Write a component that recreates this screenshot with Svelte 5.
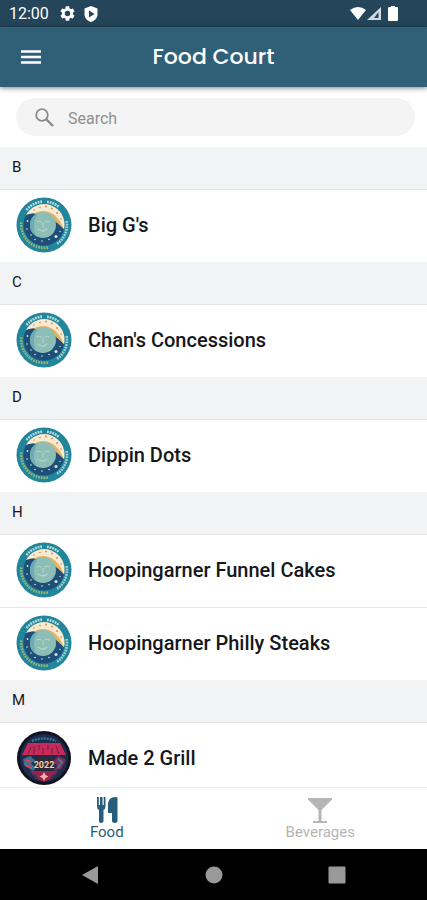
<script>
    let query = $state("");
    let activeTab = $state("food");

    const sections = [
        { letter: "B", vendors: [{ name: "Big G's", logo: "moon" }] },
        { letter: "C", vendors: [{ name: "Chan's Concessions", logo: "moon" }] },
        { letter: "D", vendors: [{ name: "Dippin Dots", logo: "moon" }] },
        {
            letter: "H",
            vendors: [
                { name: "Hoopingarner Funnel Cakes", logo: "moon" },
                { name: "Hoopingarner Philly Steaks", logo: "moon" },
            ],
        },
        { letter: "M", vendors: [{ name: "Made 2 Grill", logo: "grill" }] },
    ];

    const filtered = $derived(
        sections
            .map((section) => ({
                ...section,
                vendors: section.vendors.filter((v) =>
                    v.name.toLowerCase().includes(query.trim().toLowerCase())
                ),
            }))
            .filter((section) => section.vendors.length > 0)
    );
</script>

{#snippet moonLogo()}
    <svg class="logo" viewBox="0 0 56 56" aria-hidden="true">
        <circle cx="28" cy="28" r="27.5" fill="#21859b" />
        <!-- lettering round the rim -->
        <g fill="none" stroke-width="2.6">
            <path d="M10.5 13A23.500 23.500 0 0 1 26 4.600" stroke="#b5d9d8" stroke-dasharray="1.9 0.8" />
            <path d="M31 4.700A23.500 23.500 0 0 1 43 10" stroke="#b5d9d8" stroke-dasharray="1.9 0.8" />
            <path d="M50.6 24A22.9 22.9 0 0 1 41 47" stroke="#a5d0d2" stroke-dasharray="1.8 0.9" />
            <path d="M32 50.5A22.9 22.9 0 0 1 5.4 25" stroke="#8fb37c" stroke-dasharray="1.8 0.9" />
        </g>
        <circle cx="28" cy="28" r="20.5" fill="#1d4f78" />
        <path d="M10 18A20.5 20.5 0 0 1 48 32.5C44 26 39 20 31 17.5C24 15.500 18 15.500 10 18Z" fill="#f6ead0" />
        <path d="M17 17C29 9.500 43 17 47.500 32C43 27 40 25 36 22C29 17.500 23 17 17 17Z" fill="#e5b263" />
        <g fill="#d98258">
            <circle cx="18" cy="13" r="0.8" />
            <circle cx="24" cy="10.500" r="0.8" />
            <circle cx="30" cy="9.500" r="0.9" />
            <circle cx="36" cy="11.500" r="0.9" />
            <circle cx="41" cy="16" r="0.9" />
            <circle cx="45" cy="22" r="0.8" />
        </g>
        <circle cx="27" cy="28" r="13" fill="#8cbdb7" />
        <path d="M22 16A13 13 0 0 0 20 39C17 31 17 23 22 16Z" fill="#6cabb5" />
        <g fill="none" stroke="#b4d4c5" stroke-width="1.2" stroke-linecap="round">
            <path d="M21 25q2-1.500 4 0M29 25q2-1.500 4 0M27 26v4M22 32q5 4 9 0" />
        </g>
        <g fill="#d5e3da">
            <circle cx="11.5" cy="24" r="0.9" />
            <circle cx="11" cy="32" r="0.8" />
            <circle cx="15" cy="38" r="0.8" />
            <circle cx="19" cy="42.500" r="0.8" />
            <circle cx="26" cy="44" r="0.8" />
            <circle cx="33" cy="42.500" r="0.8" />
            <circle cx="40" cy="39.500" r="1.6" />
            <circle cx="44" cy="34.500" r="0.7" />
        </g>
    </svg>
{/snippet}

{#snippet grillLogo()}
    <svg class="logo" viewBox="0 0 56 56" aria-hidden="true">
        <circle cx="28" cy="28" r="27" fill="#11131f" />
        <circle cx="28" cy="28" r="24" fill="#1d2c4c" />
        <path d="M16 11q12-5 24 0" fill="none" stroke="#397292" stroke-width="2.500" stroke-dasharray="2 1" />
        <path d="M12 13h32l2 4 4 8H6l4-8Z" fill="#c92b58" />
        <path d="M12 24l3-7M18 16v8M23 15v5M27 18v6M32 15v5M36 18v6M40 16l3 8" fill="none" stroke="#63204a" stroke-width="1" />
        <path d="M7 29l7-3 6 5-5 2 5 5-3 3-9-6Z" fill="#39708b" />
        <path d="M10 30l5 2M9 35l7 3" stroke="#d14466" stroke-width="2" />
        <path d="M49 29l-7-3-5 6 4 4-4 5 8-2 4-7Z" fill="#792f5c" />
        <path d="M42 29l4 3-4 6" fill="none" stroke="#447e9b" stroke-width="1.600" />
        <rect x="19" y="27" width="18" height="13" fill="#302833" />
        <text class="year" x="28" y="38" text-anchor="middle">2022</text>
        <path d="M14 41h28l-5 7-9 4-9-4Z" fill="#9b214a" />
        <path d="M28 42l1.500 3 3 1.500-3 1.500-1.500 3-1.500-3-3-1.500 3-1.500Z" fill="#f0b49e" />
        <path d="M17 44l4 4M39 44l-4 4" stroke="#293b62" stroke-width="2" />
    </svg>
{/snippet}

<div class="app">
    <div class="status-bar">
        <div class="status-left">
            <span>12:00</span>
            <svg class="gear" viewBox="2 2 20 20" aria-hidden="true">
                <path fill="currentColor" fill-rule="evenodd" d="M19.140 12.940c.04-.3.06-.61.06-.94s-.02-.64-.07-.94l2.030-1.580c.18-.14.23-.41.12-.61l-1.920-3.320c-.12-.22-.37-.29-.59-.22l-2.390.96c-.5-.38-1.030-.7-1.620-.94l-.36-2.540A.48.48 0 0 0 13.920 2.400h-3.840c-.24 0-.43.17-.47.41l-.36 2.540c-.59.24-1.130.57-1.620.94l-2.390-.96c-.22-.08-.47 0-.59.22L2.740 8.870c-.12.21-.08.47.12.61l2.030 1.580c-.05.3-.09.63-.09.94s.02.64.07.94l-2.030 1.580c-.18.14-.23.41-.12.61l1.920 3.320c.12.22.37.29.59.22l2.390-.96c.5.38 1.030.7 1.620.94l.36 2.540c.05.24.24.41.48.41h3.840c.24 0 .44-.17.47-.41l.36-2.540c.59-.24 1.130-.56 1.620-.94l2.390.96c.22.08.47 0 .59-.22l1.920-3.320c.12-.22.07-.47-.12-.61ZM12 15.600a3.600 3.600 0 1 1 0-7.200 3.600 3.600 0 0 1 0 7.200Z" />
            </svg>
            <svg class="shield" viewBox="0 0 14 16" aria-hidden="true">
                <path fill="currentColor" fill-rule="evenodd" d="M7 0l6.500 2.500V8c0 4-2.500 6.600-6.500 8C3 14.600.5 12 .5 8V2.500ZM5 4.500v7L10.500 8Z" />
            </svg>
        </div>
        <svg class="signals" viewBox="0 0 48 16" aria-hidden="true">
            <path fill="currentColor" d="M0 4q8-6 16 0L8 14Z" />
            <path fill="#d3dbe2" d="M31 1v13H17Z" />
            <path fill="#24455a" d="M28.500 6v6H24Z" />
            <path fill="currentColor" d="M41 0h4v1h2q1 0 1 1v12q0 1-1 1h-8q-1 0-1-1V2q0-1 1-1h2Z" />
        </svg>
    </div>

    <header>
        <button class="menu" aria-label="Open menu">
            <svg viewBox="0 0 20 14" aria-hidden="true">
                <path d="M0 1.500h20M0 7h20M0 12.500h20" stroke="currentColor" stroke-width="2.600" />
            </svg>
        </button>
        <h1>Food Court</h1>
    </header>

    <div class="search">
        <label class="search-box">
            <svg viewBox="0 0 19 19" aria-hidden="true">
                <circle cx="7" cy="7" r="5.800" fill="none" stroke="currentColor" stroke-width="1.800" />
                <path d="M11.500 11.500l6.500 6.500" stroke="currentColor" stroke-width="2.400" />
            </svg>
            <input type="text" placeholder="Search" aria-label="Search" bind:value={query} />
        </label>
    </div>

    <main>
        {#each filtered as section (section.letter)}
            <section>
                <h2>{section.letter}</h2>
                <ul>
                    {#each section.vendors as vendor (vendor.name)}
                        <li>
                            {#if vendor.logo === "moon"}
                                {@render moonLogo()}
                            {:else}
                                {@render grillLogo()}
                            {/if}
                            <span>{vendor.name}</span>
                        </li>
                    {/each}
                </ul>
            </section>
        {/each}
    </main>

    <nav class="tabs" aria-label="Categories">
        <button class:active={activeTab === "food"} onclick={() => (activeTab = "food")}>
            <svg viewBox="0 0 24 28" aria-hidden="true">
                <g fill="currentColor">
                    <path d="M2 1h1.800v8h1.200V1h2.500v8h1.200V1h1.800v9q0 3-2 4v11q0 2-2.300 2T4 25V14q-2-1-2-4Z" />
                    <path d="M22.500 2v23q0 2-2.700 2T17 25v-8h-4V9q0-8 7.500-8 2 0 2 1Z" />
                </g>
            </svg>
            <span>Food</span>
        </button>
        <button class:active={activeTab === "beverages"} onclick={() => (activeTab = "beverages")}>
            <svg viewBox="0 0 24 28" aria-hidden="true">
                <path fill="currentColor" d="M0 2h24v1.500L13.500 14v11H19v2H5v-2h5.500V14L0 3.500Z" />
            </svg>
            <span>Beverages</span>
        </button>
    </nav>

    <div class="system-nav">
        <button aria-label="Back">
            <svg viewBox="0 0 18 18" aria-hidden="true">
                <path d="M0 9L16 0v18Z" fill="currentColor" />
            </svg>
        </button>
        <button aria-label="Home">
            <svg viewBox="0 0 18 18" aria-hidden="true">
                <circle cx="9" cy="9" r="8.500" fill="currentColor" />
            </svg>
        </button>
        <button aria-label="Recent apps">
            <svg viewBox="0 0 18 18" aria-hidden="true">
                <rect x="0.5" y="0.5" width="17" height="17" rx="1" fill="currentColor" />
            </svg>
        </button>
    </div>
</div>

<style>
    :global(body) {
        margin: 0;
    }
    .app {
        display: flex;
        flex-direction: column;
        height: 100vh;
        background-color: #fff;
        color: #15171a;
        font-family: Roboto, "Liberation Sans", sans-serif;
    }
    button {
        padding: 0;
        border: none;
        background: none;
        color: inherit;
        font: inherit;
        cursor: pointer;
    }
    svg {
        display: block;
        flex: none;
    }
    .status-bar {
        flex: none;
        display: flex;
        align-items: center;
        justify-content: space-between;
        height: 27px;
        padding: 0 29px 0 9px;
        background-color: #24455a;
        color: #fff;
        font-size: 16px;
    }
    .status-left {
        display: flex;
        align-items: center;
    }
    .gear {
        width: 15px;
        height: 15px;
        margin-left: 11px;
    }
    .shield {
        width: 14px;
        height: 16px;
        margin-left: 9px;
    }
    .signals {
        width: 48px;
        height: 16px;
    }
    header {
        position: relative;
        flex: none;
        display: grid;
        grid-template-columns: 40px 1fr 40px;
        align-items: center;
        height: 60px;
        padding: 0 11px;
        background-color: #305f78;
        box-shadow: 0 1px 5px rgba(0, 0, 0, 0.5);
        color: #fff;
    }
    .menu {
        display: flex;
        align-items: center;
        justify-content: center;
        height: 40px;
    }
    .menu svg {
        width: 20px;
        height: 14px;
    }
    h1 {
        margin: 0;
        font-family: Poppins, Inter, sans-serif;
        font-size: 22px;
        font-weight: 500;
        line-height: 32px;
        text-align: center;
    }
    .search {
        flex: none;
        padding: 11px 12px 11px 16px;
    }
    .search-box {
        display: flex;
        align-items: center;
        gap: 14px;
        height: 38px;
        padding: 0 19px;
        border-radius: 19px;
        background-color: #f4f4f4;
        color: #8a8a8a;
    }
    .search-box svg {
        width: 19px;
        height: 19px;
    }
    input {
        flex: 1;
        min-width: 0;
        padding: 2px 0 0;
        border: none;
        outline: none;
        background: none;
        color: #333;
        font: inherit;
        font-size: 16px;
    }
    input::placeholder {
        color: #8f8f8f;
        opacity: 1;
    }
    main {
        flex: 1;
        min-height: 0;
        overflow-y: auto;
        scrollbar-width: none;
    }
    h2 {
        box-sizing: border-box;
        height: 43px;
        margin: 0;
        padding: 0 12px;
        border-bottom: 1px solid #e2e4e5;
        background-color: #f1f3f4;
        font-size: 15px;
        font-weight: 400;
        line-height: 40px;
    }
    ul {
        margin: 0;
        padding: 0;
        list-style: none;
    }
    li {
        display: flex;
        align-items: center;
        gap: 16px;
        height: 70px;
        padding: 0 16px 2px;
        font-size: 20px;
        font-weight: 500;
    }
    li + li {
        border-top: 1px solid #e8e8e8;
    }
    .logo {
        width: 56px;
        height: 56px;
    }
    .year {
        fill: #f3cfae;
        font-size: 9px;
        font-weight: 700;
    }
    .tabs {
        flex: none;
        display: flex;
        border-top: 1px solid #ececec;
    }
    .tabs button {
        flex: 1;
        display: flex;
        flex-direction: column;
        align-items: center;
        height: 61px;
        padding-top: 8px;
        color: #b5b5b5;
        font-size: 15px;
        line-height: 16px;
    }
    .tabs button.active {
        color: #265d7c;
    }
    .tabs svg {
        width: 24px;
        height: 28px;
    }
    .system-nav {
        flex: none;
        display: flex;
        align-items: center;
        justify-content: center;
        gap: 105px;
        height: 51px;
        background-color: #000;
        color: #999;
    }
    .system-nav svg {
        width: 18px;
        height: 18px;
    }
</style>
